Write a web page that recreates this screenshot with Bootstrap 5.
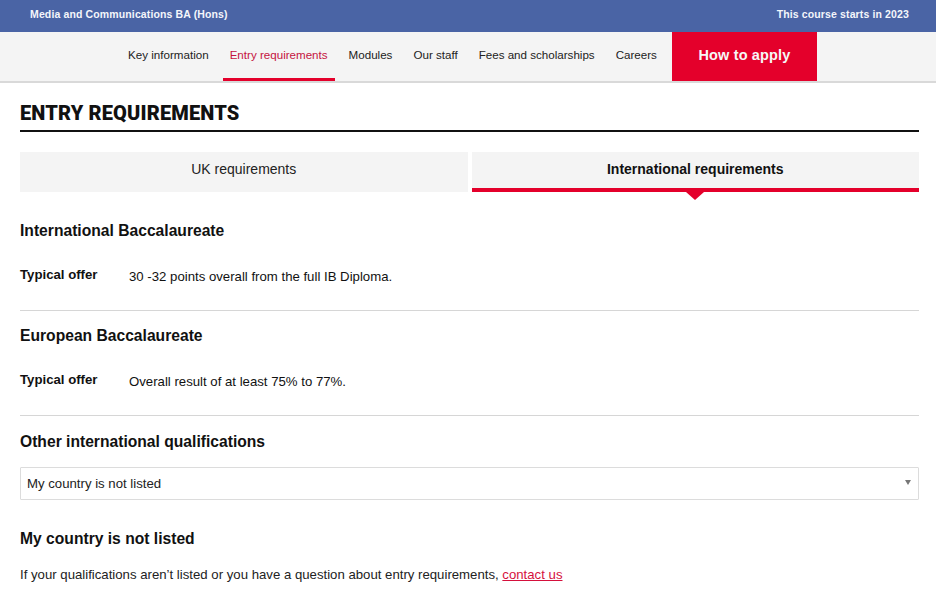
<!DOCTYPE html>
<html lang="en">
<head>
<meta charset="utf-8">
<title>Entry requirements</title>
<link rel="stylesheet" href="https://cdn.jsdelivr.net/npm/bootstrap@5.3.0/dist/css/bootstrap.min.css">
<style>
html,body{height:597px;overflow:hidden}
body{font-family:"Liberation Sans",Arial,sans-serif;color:#111;background:#fff;font-size:13.2px}
.topbar{height:32px;background:#4a64a5;color:#f4f6fb;font-size:10.5px;font-weight:700;padding:0 27px 2px 30px;letter-spacing:.13px}
.subnav{height:51px;padding-left:2px;background:#f4f4f4;border-bottom:2px solid #d9d9d9}
.subnav-link{height:49px;padding:0 7px 1px;margin-right:7px;color:#222;font-size:11.6px;text-decoration:none;border-bottom:3px solid transparent}
.subnav-link.is-on{color:#c5133f;border-bottom-color:#e4002b}
.apply-btn{width:145px;height:49px;margin-left:1px;padding-bottom:2px;background:#e4002b;color:#f7f7f7;font-size:14.5px;font-weight:700;text-decoration:none;letter-spacing:.01em}
.page-body{padding:0 17px 0 20px}
.page-title{font-family:Roboto,"Liberation Sans",sans-serif;font-weight:900;font-size:20px;letter-spacing:.15px;line-height:26px;margin:17px 0 0;padding-bottom:4px;border-bottom:2px solid #111;color:#111}
.tab-row{gap:4px;margin-top:20px}
.tab-item{flex:1 1 0;height:40px;background:#f4f4f4;font-size:14px;color:#222;position:relative;padding-bottom:5px}
.tab-item.is-on{font-weight:700;color:#111;border-bottom:4px solid #e4002b;padding-bottom:1px}
.tab-item.is-on::after{content:"";position:absolute;left:50%;top:calc(100% + 4px);margin-left:-9px;border-left:9px solid transparent;border-right:9px solid transparent;border-top:8px solid #e4002b}
.sec-title{font-size:15.65px;font-weight:700;line-height:20px;margin:0;color:#111}
.sec-title.title-first{margin-top:29px}
.sec-title.title-other{margin-top:16px}
.sec-title.title-last{margin-top:29px}
.offer-row{margin-top:27px;line-height:18px}
.offer-key{width:109px;font-weight:700;font-size:13.2px;margin-top:-2px}
.sec-rule{border:0;border-top:1px solid #d6d6d6;opacity:1;margin:24px 0 15px}
.picker{height:33px;border:1px solid #dcdcdc;border-radius:1px;padding:0 6px;margin-top:15px;color:#222}
.picker-arrow{width:0;height:0;border-left:3.5px solid transparent;border-right:3.5px solid transparent;border-top:5px solid #777;margin:0 1px 3px 0}
.foot-text{line-height:18px;color:#222;margin:17px 0 0}
.foot-text a{color:#d5103c}
</style>
</head>
<body>
<div class="topbar d-flex justify-content-between align-items-center">
  <span>Media and Communications BA (Hons)</span>
  <span>This course starts in 2023</span>
</div>
<nav class="subnav d-flex justify-content-center">
  <a class="subnav-link d-flex align-items-center" href="#">Key information</a>
  <a class="subnav-link is-on d-flex align-items-center" href="#">Entry requirements</a>
  <a class="subnav-link d-flex align-items-center" href="#">Modules</a>
  <a class="subnav-link d-flex align-items-center" href="#">Our staff</a>
  <a class="subnav-link d-flex align-items-center" href="#">Fees and scholarships</a>
  <a class="subnav-link d-flex align-items-center" href="#">Careers</a>
  <a class="apply-btn d-flex align-items-center justify-content-center" href="#">How to apply</a>
</nav>
<main class="page-body">
  <h1 class="page-title">ENTRY REQUIREMENTS</h1>
  <div class="tab-row d-flex">
    <div class="tab-item d-flex align-items-center justify-content-center">UK requirements</div>
    <div class="tab-item is-on d-flex align-items-center justify-content-center">International requirements</div>
  </div>
  <h2 class="sec-title title-first">International Baccalaureate</h2>
  <div class="offer-row d-flex"><div class="offer-key">Typical offer</div><div>30 -32 points overall from the full IB Diploma.</div></div>
  <hr class="sec-rule">
  <h2 class="sec-title">European Baccalaureate</h2>
  <div class="offer-row d-flex"><div class="offer-key">Typical offer</div><div>Overall result of at least 75% to 77%.</div></div>
  <hr class="sec-rule">
  <h2 class="sec-title title-other">Other international qualifications</h2>
  <div class="picker d-flex justify-content-between align-items-center"><span>My country is not listed</span><span class="picker-arrow"></span></div>
  <h2 class="sec-title title-last">My country is not listed</h2>
  <p class="foot-text">If your qualifications aren’t listed or you have a question about entry requirements, <a href="#">contact us</a></p>
</main>
<script src="https://cdn.jsdelivr.net/npm/bootstrap@5.3.0/dist/js/bootstrap.bundle.min.js"></script>
</body>
</html>
